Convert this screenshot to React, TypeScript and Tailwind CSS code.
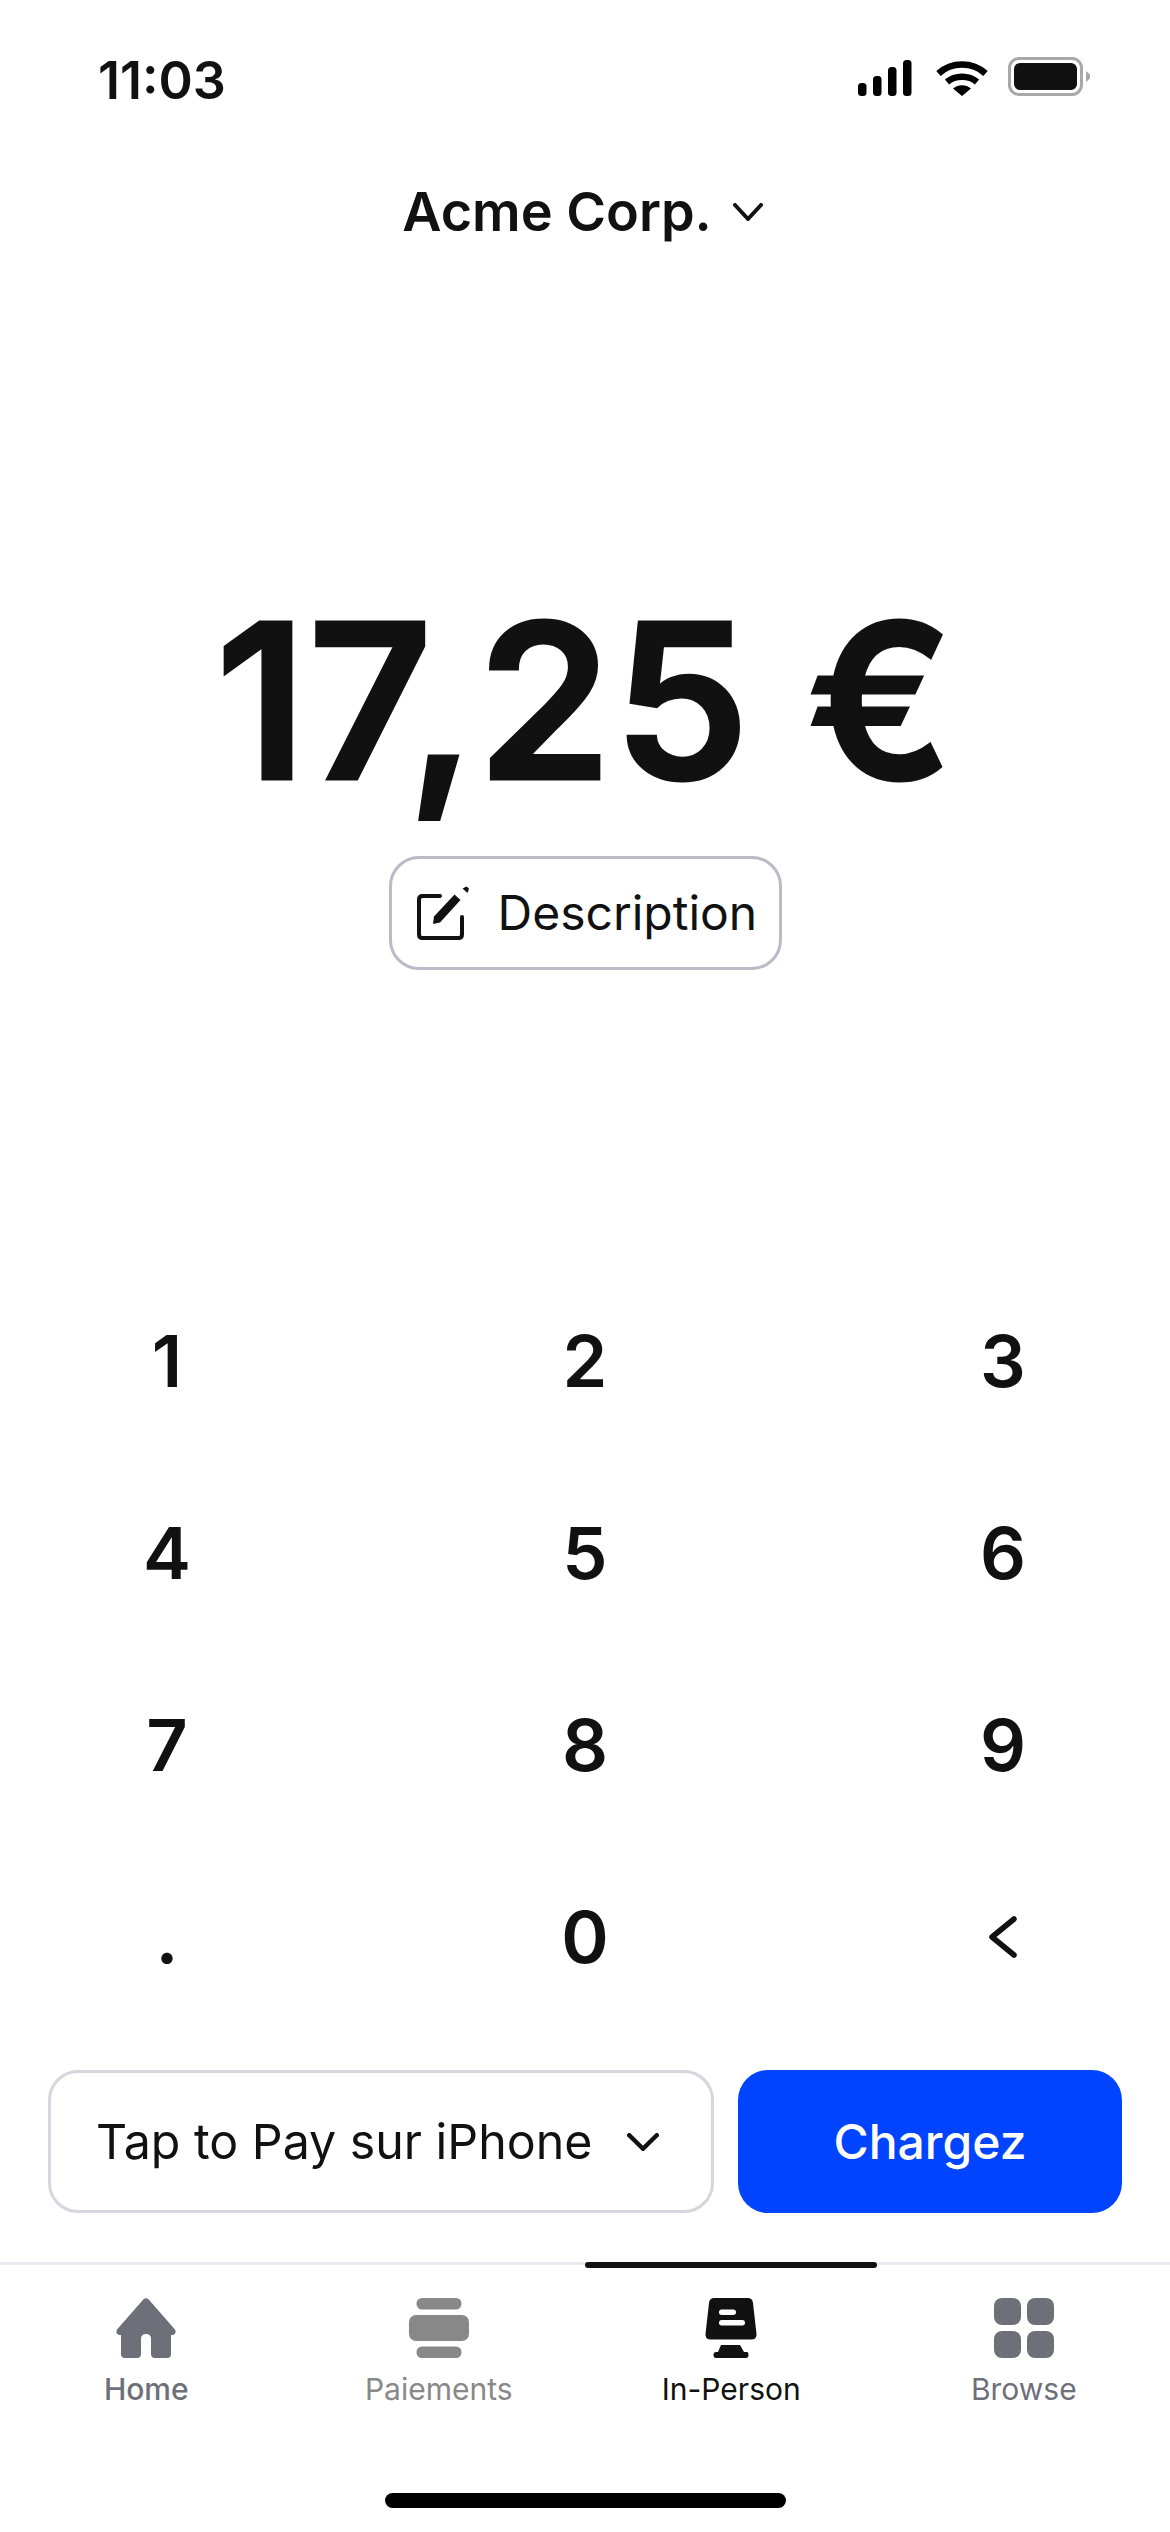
import React from "react";

const Chevron = ({ w, h, sw }: { w: number; h: number; sw: number }) => (
  <svg width={w} height={h} viewBox={`0 0 ${w} ${h}`} fill="none">
    <path d={`M${sw / 2} ${sw / 2} L${w / 2} ${h - sw / 2} L${w - sw / 2} ${sw / 2}`} stroke="#111" strokeWidth={sw} strokeLinecap="round" strokeLinejoin="round" />
  </svg>
);

const StatusIcons = () => (
  <div className="mb-[5px] flex items-end">
    <svg width="54" height="36" viewBox="0 0 54 36" fill="#000">
      <rect x="0" y="23" width="8.5" height="13" rx="3.5" />
      <rect x="15" y="16" width="8.5" height="20" rx="3.5" />
      <rect x="30" y="7" width="8.5" height="29" rx="3.5" />
      <rect x="45" y="0" width="8.5" height="36" rx="3.5" />
    </svg>
    <svg className="ml-[24px]" width="52" height="36" viewBox="0 0 52 36" fill="none">
      <path d="M2.5 13.5 C15.5 1.5 36.5 1.5 49.5 13.5" stroke="#000" strokeWidth="6.5" />
      <path d="M11 22 C19 15 33 15 41 22" stroke="#000" strokeWidth="6.5" />
      <path d="M17 28.5 C22 24 30 24 35 28.5 L26 36 Z" fill="#000" />
    </svg>
    <div className="ml-[20px] flex items-center">
      <div className="flex h-[39px] w-[75px] items-center justify-center rounded-[11px] border-[3px] border-[#a8a8a8] bg-white">
        <div className="h-[27px] w-[63px] rounded-[6px] bg-[#111]" />
      </div>
      <svg className="ml-[3px]" width="4" height="11" viewBox="0 0 4 11" fill="#a8a8a8">
        <path d="M0 0 L4 3.5 L4 7.5 L0 11 Z" />
      </svg>
    </div>
  </div>
);

const EditIcon = () => (
  <svg width="54" height="54" viewBox="0 0 54 54" fill="none">
    <path d="M23 10 H5.5 Q2 10 2 13.5 V48.5 Q2 52 5.5 52 H41.5 Q45 52 45 48.5 V31" stroke="#111" strokeWidth="4" strokeLinecap="round" />
    <path d="M16 38 L17 30.5 L37.5 8.5 L43.5 14 L23 36.5 Z" fill="#111" />
    <path d="M45.5 2.5 L49.5 0.5 L52 2.5 L50.5 7 Z" fill="#111" />
  </svg>
);

const HomeIcon = () => (
  <svg width="60" height="60" viewBox="0 0 60 60" fill="#6e7079">
    <path d="M27.5 1.2 Q30 -0.6 32.5 1.2 L59 31.5 Q61 36 57 37 H55 V56 Q55 60 51 60 H39 Q35 60 35 56 V41 Q35 36 30 36 Q25 36 25 41 V56 Q25 60 21 60 H9 Q5 60 5 56 V37 H3 Q-1 36 1 31.5 Z" />
  </svg>
);

const PaymentsIcon = () => (
  <svg width="60" height="60" viewBox="0 0 60 60" fill="#888888">
    <rect x="7.5" y="0" width="45" height="11.5" rx="5.5" />
    <rect x="0" y="17" width="60" height="26" rx="7" />
    <rect x="7.5" y="48.5" width="45" height="11.5" rx="5.5" />
  </svg>
);

const TerminalIcon = () => (
  <svg width="60" height="60" viewBox="0 0 60 60">
    <path d="M8 5 Q8.4 0 13.5 0 H46.5 Q51.6 0 52 5 L55.5 36 Q56 41.5 50 41.5 H10 Q4 41.5 4.5 36 Z" fill="#111" />
    <rect x="18" y="11.5" width="17" height="5.5" rx="2.7" fill="#fff" />
    <rect x="18" y="22" width="26" height="5.5" rx="2.7" fill="#fff" />
    <path d="M20 47 H39 L43 54 H46 Q47.5 54 47.5 57 Q47.5 60 45 60 H15 Q12.5 60 12.5 57 Q12.5 54 15 54 H17 Z" fill="#111" />
  </svg>
);

const GridIcon = () => (
  <svg width="60" height="60" viewBox="0 0 60 60" fill="#6e7079">
    <rect x="0" y="0" width="27" height="27" rx="8" />
    <rect x="33" y="0" width="27" height="27" rx="8" />
    <rect x="0" y="33" width="27" height="27" rx="8" />
    <rect x="33" y="33" width="27" height="27" rx="8" />
  </svg>
);

const keys = ["1", "2", "3", "4", "5", "6", "7", "8", "9", ".", "0"];

const tabs = [
  { label: "Home", icon: <HomeIcon />, cls: "text-[#6e7079] font-medium" },
  { label: "Paiements", icon: <PaymentsIcon />, cls: "text-[#888888]" },
  { label: "In-Person", icon: <TerminalIcon />, cls: "text-[#111111]" },
  { label: "Browse", icon: <GridIcon />, cls: "text-[#6e7079]" },
];

export default function App() {
  return (
    <div className="flex h-[2532px] w-[1170px] flex-col overflow-hidden bg-white text-[#111111] [font-family:Inter,sans-serif]">
      {/* status bar */}
      <div className="flex h-[101px] items-end justify-between pl-[98px] pr-[80px]">
        <span className="text-[52px] leading-[40px] font-semibold">11:03</span>
        <StatusIcons />
      </div>

      {/* account */}
      <div className="mt-[81px] flex h-[60px] items-center justify-center gap-[21px] pr-[5px]">
        <span className="text-[54px] leading-[60px] font-semibold">Acme Corp.</span>
        <Chevron w={30} h={18} sw={4} />
      </div>

      {/* amount */}
      <div className="mt-[359px] flex h-[200px] items-center justify-center">
        <span className="text-[216px] leading-[200px] font-semibold tracking-[1.5px] whitespace-nowrap [-webkit-text-stroke:3px_#111111]">17,25 €</span>
      </div>

      <div className="mt-[55px] flex justify-center">
        <div className="flex h-[114px] w-[393px] items-center gap-[27px] rounded-[30px] border-[3px] border-[#b9bcc6] pl-[25px]">
          <EditIcon />
          <span className="text-[48px] leading-[56px]">Description</span>
        </div>
      </div>

      {/* keypad */}
      <div className="mt-[295px] grid grid-cols-[90px_90px_90px] justify-between px-[122px] [grid-auto-rows:192px]">
        {keys.map((k) => (
          <div key={k} className="flex items-center justify-center text-[72px] leading-none font-semibold">
            {k}
          </div>
        ))}
        <div className="flex items-center justify-center">
          <svg width="30" height="42" viewBox="0 0 30 42" fill="none">
            <path d="M26 3 L4 21 L26 39" stroke="#111" strokeWidth="5.5" strokeLinecap="round" strokeLinejoin="round" />
          </svg>
        </div>
      </div>

      {/* actions */}
      <div className="mt-[37px] flex gap-[24px] px-[48px]">
        <div className="flex h-[143px] w-[666px] items-center rounded-[30px] border-[3px] border-[#d6d6de] pl-[45px]">
          <span className="text-[48.3px] leading-[60px]">Tap to Pay sur iPhone</span>
          <span className="ml-[35px] flex">
            <Chevron w={32} h={18} sw={4.5} />
          </span>
        </div>
        <div className="flex h-[143px] w-[384px] items-center justify-center rounded-[30px] bg-[#0044ff] text-[48px] leading-[60px] font-medium text-white">
          Chargez
        </div>
      </div>

      {/* tab bar */}
      <div className="relative mt-[49px] grid grid-cols-4 border-t-[3px] border-[#eaeaf0] pt-[33px]">
        <div className="absolute top-[-3px] left-[585px] h-[6px] w-[292px] rounded-full bg-[#111]" />
        {tabs.map((t) => (
          <div key={t.label} className="flex flex-col items-center">
            {t.icon}
            <span className={`mt-[13px] text-[30px] leading-[36px] ${t.cls}`}>{t.label}</span>
          </div>
        ))}
      </div>

      {/* home indicator */}
      <div className="mt-[86px] flex justify-center">
        <div className="h-[15px] w-[401px] rounded-full bg-black" />
      </div>
    </div>
  );
}
